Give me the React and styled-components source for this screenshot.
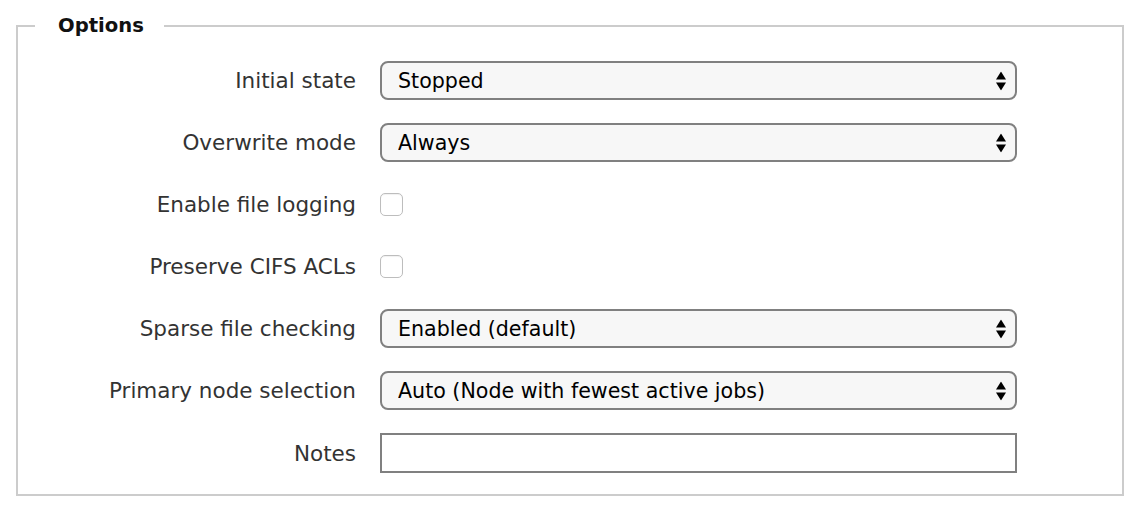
import React from "react";
import styled, { createGlobalStyle } from "styled-components";

const GlobalStyle = createGlobalStyle`
  html, body {
    margin: 0;
    padding: 0;
    background: #fff;
  }
  body {
    font-family: "DejaVu Sans", Verdana, sans-serif;
  }
`;

const Page = styled.div`
  padding: 14px 17px 0 16px;
  width: 1108px;
`;

const Fieldset = styled.fieldset`
  margin: 0;
  border: 2px solid #cccccc;
  padding: 23px 105px 21px 0;
  min-width: 0;
`;

const Legend = styled.legend`
  margin-left: 17px;
  padding: 0 20px 0 23px;
  font-size: 19.6px;
  font-weight: bold;
  color: #111;
  line-height: 24px;
`;

const Form = styled.div`
  display: grid;
  grid-template-columns: 338px 637px;
  column-gap: 24px;
  row-gap: 23px;
  align-items: center;
`;

const Label = styled.label`
  text-align: right;
  font-size: 21.5px;
  color: #333;
  line-height: 39px;
  white-space: nowrap;
`;

const SelectWrap = styled.div`
  position: relative;
  height: 39px;
`;

const Select = styled.select`
  appearance: none;
  -webkit-appearance: none;
  width: 100%;
  height: 100%;
  box-sizing: border-box;
  border: 2px solid #808080;
  border-radius: 8px;
  background: #f7f7f7;
  padding: 0 36px 0 16px;
  font-family: "DejaVu Sans", Verdana, sans-serif;
  font-size: 20.6px;
  color: #000;
  outline: none;
`;

const Arrows = styled.svg`
  position: absolute;
  right: 11px;
  top: 50%;
  transform: translateY(-50%);
  pointer-events: none;
`;

const Check = styled.input.attrs({ type: "checkbox" })`
  appearance: none;
  -webkit-appearance: none;
  margin: 0;
  width: 23px;
  height: 23px;
  box-sizing: border-box;
  border: 1px solid #bdbdbd;
  border-radius: 5px;
  background: #fff;
  box-shadow: inset 0 1px 1px rgba(0, 0, 0, 0.06);
`;

const CheckCell = styled.div`
  height: 39px;
  display: flex;
  align-items: center;
`;

const TextInput = styled.input`
  box-sizing: border-box;
  width: 100%;
  height: 40px;
  border: 2px solid #808080;
  border-radius: 0;
  background: #fff;
  font-family: "DejaVu Sans", Verdana, sans-serif;
  font-size: 20px;
  padding: 0 10px;
  outline: none;
`;

const UpDown = () => (
  <Arrows width="10" height="19" viewBox="0 0 10 19">
    <polygon points="0,8 5,0 10,8" fill="#000" />
    <polygon points="0,11 10,11 5,19" fill="#000" />
  </Arrows>
);

const Dropdown = ({ value }) => (
  <SelectWrap>
    <Select defaultValue={value}>
      <option>{value}</option>
    </Select>
    <UpDown />
  </SelectWrap>
);

export default function App() {
  return (
    <>
      <GlobalStyle />
      <Page>
        <Fieldset>
          <Legend>Options</Legend>
          <Form>
            <Label>Initial state</Label>
            <Dropdown value="Stopped" />

            <Label>Overwrite mode</Label>
            <Dropdown value="Always" />

            <Label>Enable file logging</Label>
            <CheckCell>
              <Check />
            </CheckCell>

            <Label>Preserve CIFS ACLs</Label>
            <CheckCell>
              <Check />
            </CheckCell>

            <Label>Sparse file checking</Label>
            <Dropdown value="Enabled (default)" />

            <Label>Primary node selection</Label>
            <Dropdown value="Auto (Node with fewest active jobs)" />

            <Label>Notes</Label>
            <TextInput type="text" />
          </Form>
        </Fieldset>
      </Page>
    </>
  );
}
